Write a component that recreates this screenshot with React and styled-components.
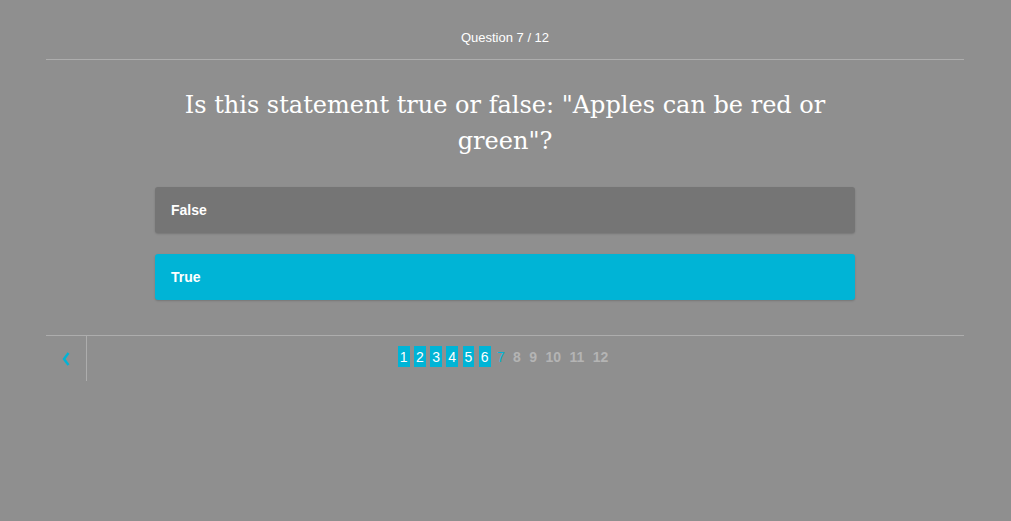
import React from "react";
import styled, { createGlobalStyle } from "styled-components";

const Global = createGlobalStyle`
  html, body { margin: 0; padding: 0; background: #8f8f8f; }
  body { font-family: "Liberation Sans", Arial, sans-serif; }
`;

const Page = styled.div`
  width: 918px;
  margin: 0 47px 0 46px;
  padding-top: 30px;
`;

const Header = styled.div`
  color: #fff;
  font-size: 13px;
  text-align: center;
  line-height: 16px;
  padding-bottom: 13px;
  border-bottom: 1px solid #adadad;
`;

const Body = styled.div`
  display: flex;
  flex-direction: column;
  align-items: center;
  padding: 27px 0 35px;
  border-bottom: 1px solid #adadad;
`;

const Title = styled.h1`
  margin: 0 0 28px;
  width: 700px;
  color: #fff;
  font-family: "DejaVu Serif", Georgia, serif;
  font-weight: normal;
  font-size: 24px;
  line-height: 36px;
  text-align: center;
`;

const Options = styled.div`
  width: 700px;
  display: flex;
  flex-direction: column;
  gap: 21px;
`;

const Option = styled.div`
  box-sizing: border-box;
  height: 46px;
  display: flex;
  align-items: center;
  padding: 0 16px;
  border-radius: 3px;
  color: #fff;
  font-weight: bold;
  font-size: 14px;
  background: ${(p) => (p.$selected ? "#00b4d6" : "#757575")};
  box-shadow: 0 1px 2px rgba(0, 0, 0, 0.18);
`;

const Footer = styled.div`
  display: flex;
  height: 45px;
`;

const Back = styled.button`
  width: 41px;
  border: none;
  border-right: 1px solid #adadad;
  background: none;
  padding: 0;
  display: flex;
  align-items: center;
  justify-content: center;
  cursor: pointer;
`;

const Pager = styled.div`
  flex: 1;
  display: flex;
  justify-content: center;
  align-items: flex-start;
  padding-top: 10px;
  gap: 4.4px;
  margin-left: -43px;
`;

const PageNum = styled.span`
  box-sizing: border-box;
  height: 21px;
  padding: 0 2px;
  display: flex;
  align-items: center;
  justify-content: center;
  font-size: 14px;
  font-weight: ${(p) => (p.$state === "todo" ? "bold" : "normal")};
  color: ${(p) =>
    p.$state === "done" ? "#fff" : p.$state === "current" ? "#00b4d6" : "#b4b4b4"};
  background: ${(p) => (p.$state === "done" ? "#00b4d6" : "transparent")};
`;

export default function App() {
  const pages = Array.from({ length: 12 }, (_, i) => i + 1);
  const current = 7;
  return (
    <>
      <Global />
      <Page>
        <Header>Question 7 / 12</Header>
        <Body>
          <Title>Is this statement true or false: "Apples can be red or green"?</Title>
          <Options>
            <Option>False</Option>
            <Option $selected>True</Option>
          </Options>
        </Body>
        <Footer>
          <Back aria-label="Previous">
            <svg width="8" height="14" viewBox="0 0 8 14">
              <path d="M6.5 1 L2 7 L6.5 13" fill="none" stroke="#00b4d6" strokeWidth="2.4" />
            </svg>
          </Back>
          <Pager>
            {pages.map((n) => (
              <PageNum
                key={n}
                $state={n < current ? "done" : n === current ? "current" : "todo"}
              >
                {n}
              </PageNum>
            ))}
          </Pager>
        </Footer>
      </Page>
    </>
  );
}
